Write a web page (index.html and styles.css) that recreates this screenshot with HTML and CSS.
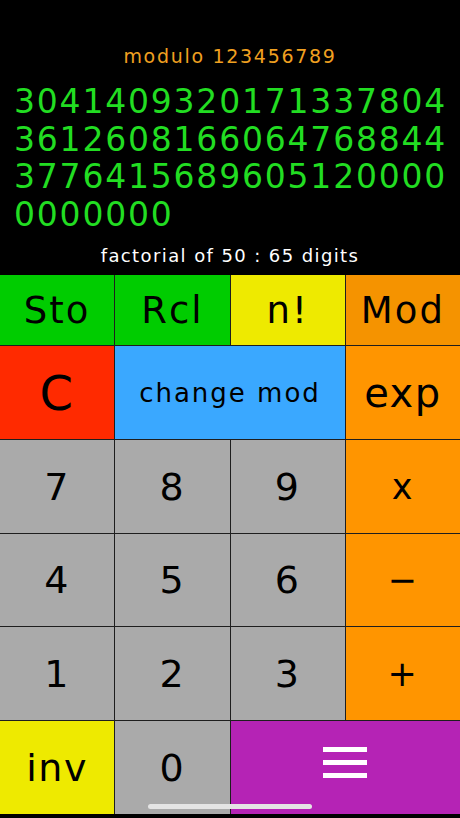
FILE: index.html
```html
<!DOCTYPE html>
<html lang="en">
<head>
    <meta charset="UTF-8">
    <meta name="viewport" content="width=device-width, initial-scale=1.0">
    <title>Factorial Calculator</title>
    <link rel="stylesheet" href="styles.css">
</head>
<body>
    <div class="screen">
        <div class="display">
            <div class="mod-line">modulo 123456789</div>
            <div class="number">3041409320171337804361260816606476884437764156896051200000000000</div>
            <div class="info">factorial of 50 : 65 digits</div>
        </div>

        <div class="keypad">
            <div class="key green label-sm">Sto</div>
            <div class="key green label-sm">Rcl</div>
            <div class="key yellow label-sm">n!</div>
            <div class="key orange-dark label-sm">Mod</div>

            <div class="key red label-c">C</div>
            <div class="key blue wide label-mod">change mod</div>
            <div class="key orange label-exp">exp</div>

            <div class="key grey">7</div>
            <div class="key grey">8</div>
            <div class="key grey">9</div>
            <div class="key orange label-op">x</div>

            <div class="key grey">4</div>
            <div class="key grey">5</div>
            <div class="key grey">6</div>
            <div class="key orange label-op">&minus;</div>

            <div class="key grey">1</div>
            <div class="key grey">2</div>
            <div class="key grey">3</div>
            <div class="key orange label-op">+</div>

            <div class="key yellow">inv</div>
            <div class="key grey">0</div>
            <div class="key purple wide menu">
                <!-- menu icon -->
                <svg width="44" height="31" viewBox="0 0 44 31">
                    <rect x="0" y="0" width="44" height="5" fill="#fff"/>
                    <rect x="0" y="13" width="44" height="5" fill="#fff"/>
                    <rect x="0" y="26" width="44" height="5" fill="#fff"/>
                </svg>
            </div>
        </div>
        <div class="home-bar"></div>
    </div>
</body>
</html>
```

FILE: styles.css
```css
body {
    margin: 0;
    background-color: #000;
    font-family: "DejaVu Sans", "Liberation Sans", sans-serif;
}
.screen {
    position: relative;
    width: 460px;
    height: 818px;
    display: flex;
    flex-direction: column;
    background-color: #000;
}
.display {
    height: 275px;
    display: flex;
    flex-direction: column;
}
.mod-line {
    margin-top: 44px;
    font-size: 19px;
    line-height: 24px;
    letter-spacing: 1.7px;
    color: #f0a020;
    text-align: center;
}
.number {
    margin-top: 15px;
    padding-left: 14px;
    font-size: 33px;
    line-height: 37.5px;
    letter-spacing: 1.8px;
    color: #22dd22;
    word-break: break-all;
}
.info {
    margin-top: 12px;
    font-size: 18px;
    line-height: 22px;
    letter-spacing: 1.4px;
    color: #fff;
    text-align: center;
}
.keypad {
    display: grid;
    grid-template-columns: repeat(4, 1fr);
    grid-template-rows: 70px 93px 93px 92px 93px 93px;
    gap: 1px;
    background-color: #1e1e1e;
}
.key {
    display: flex;
    align-items: center;
    justify-content: center;
    font-size: 38px;
    letter-spacing: 1.5px;
    color: #000;
}
.wide {
    grid-column: span 2;
}
.label-sm {
    font-size: 37px;
    letter-spacing: 2px;
}
.label-c {
    font-size: 48px;
}
.label-mod {
    font-size: 26px;
    letter-spacing: 2px;
}
.label-exp {
    font-size: 40px;
}
.label-op {
    font-size: 35px;
}
.menu {
    padding-bottom: 10px;
}
.green { background-color: #00cc00; }
.yellow { background-color: #eeea00; }
.orange { background-color: #ff9500; }
.orange-dark { background-color: #f59300; }
.red { background-color: #ff2a00; }
.blue { background-color: #3aa8ff; }
.grey { background-color: #aaaaaa; }
.purple { background-color: #b523b5; }
.home-bar {
    position: absolute;
    left: 148px;
    bottom: 9px;
    width: 164px;
    height: 5px;
    border-radius: 3px;
    background-color: #e4e4e4;
}
```
